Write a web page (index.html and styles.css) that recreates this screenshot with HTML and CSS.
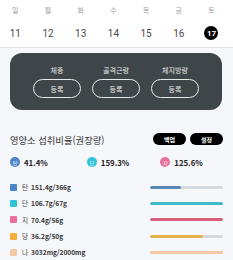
FILE: index.html
```html
<!DOCTYPE html>
<html lang="ko">
<head>
<meta charset="utf-8">
<link rel="stylesheet" href="styles.css">
</head>
<body>
<div class="header">
  <div class="week">
    <span class="wd">일</span><span class="wd">월</span><span class="wd">화</span><span class="wd">수</span><span class="wd">목</span><span class="wd">금</span><span class="wd">토</span>
  </div>
  <div class="week dates">
    <span class="d">11</span><span class="d">12</span><span class="d">13</span><span class="d">14</span><span class="d">15</span><span class="d">16</span><span class="d"><b class="sel">17</b></span>
  </div>
</div>

<div class="card">
  <div class="col"><div class="lbl">체중</div><div class="pill">등록</div></div>
  <div class="col"><div class="lbl">골격근량</div><div class="pill">등록</div></div>
  <div class="col"><div class="lbl">체지방량</div><div class="pill">등록</div></div>
</div>

<div class="title-row">
  <div class="title">영양소 섭취비율(권장량)</div>
  <div class="btns"><span class="bbtn">백업</span><span class="bbtn">설정</span></div>
</div>

<div class="stats">
  <div class="stat s1"><span class="dot c-blue">탄</span>41.4%</div>
  <div class="stat s2"><span class="dot c-cyan">단</span>159.3%</div>
  <div class="stat s3"><span class="dot c-pink">지</span>125.6%</div>
</div>

<div class="list">
  <div class="item"><span class="sq c-blue"></span><span class="nm">탄</span><span class="val">151.4g/366g</span><span class="bar"><span class="fill f-blue" style="width:42%"></span></span></div>
  <div class="item"><span class="sq c-cyan"></span><span class="nm">단</span><span class="val">106.7g/67g</span><span class="bar"><span class="fill f-cyan" style="width:100%"></span></span></div>
  <div class="item"><span class="sq c-pink"></span><span class="nm">지</span><span class="val">70.4g/56g</span><span class="bar"><span class="fill f-pink" style="width:100%"></span></span></div>
  <div class="item"><span class="sq c-orange"></span><span class="nm">당</span><span class="val">36.2g/50g</span><span class="bar"><span class="fill f-orange" style="width:72%"></span></span></div>
  <div class="item"><span class="sq c-peach"></span><span class="nm">나</span><span class="val">3032mg/2000mg</span><span class="bar"><span class="fill f-peach" style="width:100%"></span></span></div>
</div>
</body>
</html>
```

FILE: styles.css
```css
* { box-sizing: border-box; }
html, body { margin: 0; padding: 0; }
body {
  width: 233px;
  height: 260px;
  overflow: hidden;
  background: #f6f7fb;
  font-family: "Noto Sans CJK KR", "Noto Sans", sans-serif;
  color: #333;
}
.header {
  background: #ffffff;
  height: 48px;
  border-bottom: 1px solid #e4e4e6;
  padding-top: 4px;
}
.week {
  display: grid;
  grid-template-columns: repeat(7, 32.7px);
  margin-left: -1px;
}
.wd {
  text-align: center;
  font-size: 7px;
  line-height: 12px;
  color: #a0a0a0;
}
.dates { margin-top: 10px; }
.d {
  display: flex;
  justify-content: center;
  align-items: center;
  height: 14px;
  font-size: 10px;
  color: #4a4a4a;
  font-family: "Roboto", "Noto Sans", sans-serif;
}
.sel {
  display: flex;
  justify-content: center;
  align-items: center;
  width: 14px;
  height: 14px;
  border-radius: 50%;
  background: #000;
  color: #fff;
  font-size: 8px;
  font-weight: 700;
}
.card {
  margin: 5px 11px 0 10px;
  height: 57px;
  background: #3f4649;
  border-radius: 12px;
  display: flex;
  justify-content: center;
  gap: 11px;
  padding-top: 12px;
}
.col {
  width: 48px;
  display: flex;
  flex-direction: column;
  align-items: center;
}
.lbl {
  font-size: 7px;
  line-height: 10px;
  color: #e6e8e8;
}
.pill {
  margin-top: 4px;
  width: 48px;
  height: 19px;
  border: 1px solid #e8eaea;
  border-radius: 10px;
  display: flex;
  justify-content: center;
  align-items: center;
  font-size: 7px;
  color: #f0f0f0;
}
.title-row {
  margin-top: 23px;
  height: 12px;
  padding: 0 10px;
  display: flex;
  justify-content: space-between;
  align-items: center;
}
.title {
  font-size: 9.3px;
  color: #333;
  margin-top: 2px;
}
.btns { display: flex; gap: 4px; }
.bbtn {
  width: 33px;
  height: 12px;
  border-radius: 6px;
  background: #000;
  color: #fff;
  font-size: 6px;
  font-weight: 700;
  display: flex;
  justify-content: center;
  align-items: center;
}
.stats {
  margin-top: 12px;
  height: 10px;
  padding-left: 10px;
  display: flex;
  align-items: center;
}
.stat {
  display: flex;
  align-items: center;
  font-size: 7.8px;
  font-weight: 700;
  color: #222;
}
.s2 { margin-left: 39px; }
.s3 { margin-left: 31px; }
.dot {
  width: 10px;
  height: 10px;
  border-radius: 50%;
  color: #fff;
  font-size: 5px;
  font-weight: 400;
  display: inline-flex;
  justify-content: center;
  align-items: center;
  margin-right: 4px;
}
.c-blue { background: #4a86c8; }
.c-cyan { background: #2ec4d6; }
.c-pink { background: #e8709a; }
.c-orange { background: #f4b03a; }
.c-peach { background: #f5c8a4; }
.list { margin-top: 12px; }
.item {
  height: 16.3px;
  padding-left: 10px;
  display: flex;
  align-items: center;
  font-size: 6.6px;
}
.sq {
  width: 7px;
  height: 7px;
  border-radius: 1px;
  margin-right: 5px;
}
.nm { color: #444; margin-right: 3px; }
.val { font-weight: 700; color: #333; }
.bar {
  margin-left: auto;
  margin-right: 10px;
  width: 73px;
  height: 3px;
  border-radius: 2px;
  background: #d5dae0;
  overflow: hidden;
  display: flex;
}
.fill { height: 100%; border-radius: 2px; }
.f-blue { background: #5b86ba; }
.f-cyan { background: #3bbcc8; }
.f-pink { background: #d9607a; }
.f-orange { background: #e8b04a; }
.f-peach { background: #f3c9a6; }
```
